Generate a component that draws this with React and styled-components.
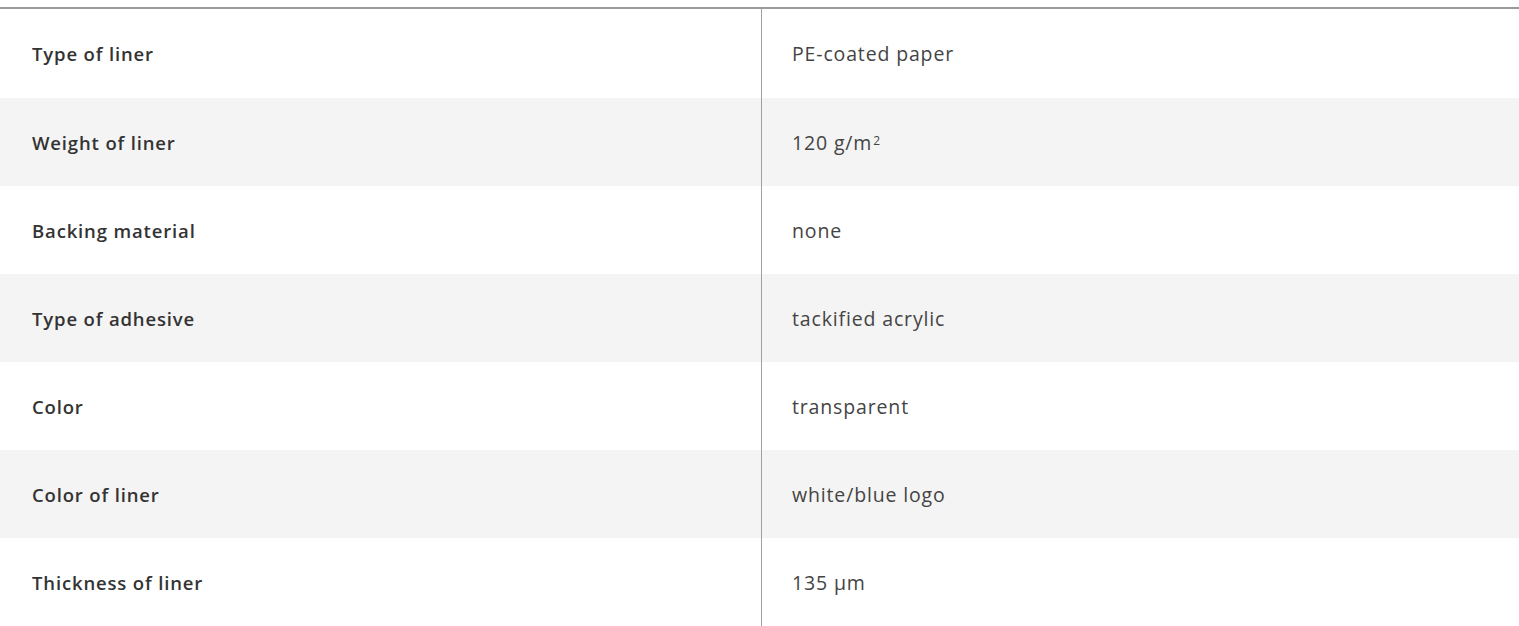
import styled, { createGlobalStyle } from "styled-components"

const GlobalStyle = createGlobalStyle`
    body {
        margin: 0;
        background: #fff;
        font-family: "Open Sans", "Liberation Sans", sans-serif;
    }
`;

const Page = styled.div`
    padding-top: 7px;
`;

const Table = styled.div`
    display: grid;
    grid-template-columns: 761px 1fr;
    border-top: 2px solid #9a9a9a;
`;

const Row = styled.div`
    display: contents;
`;

const Cell = styled.div`
    height: ${(p) => (p.first ? 89 : 88)}px;
    display: flex;
    align-items: center;
    box-sizing: border-box;
    background: ${(p) => (p.shaded ? "#f4f4f4" : "#fff")};
`;

const Label = styled(Cell)`
    padding-left: 32px;
    font-size: 18.5px;
    font-weight: 600;
    letter-spacing: 0.85px;
    color: #333;
`;

const Value = styled(Cell)`
    padding-left: 30px;
    border-left: 1px solid #a0a0a0;
    font-size: 19.5px;
    font-weight: 400;
    letter-spacing: 0.85px;
    color: #444;
`;

const Sup = styled.sup`
    font-size: 12px;
    line-height: 0;
    position: relative;
    top: -1px;
    margin-left: 1px;
    vertical-align: super;
`;

const rows = [
    ["Type of liner", "PE-coated paper"],
    ["Weight of liner", <>120 g/m<Sup>2</Sup></>],
    ["Backing material", "none"],
    ["Type of adhesive", "tackified acrylic"],
    ["Color", "transparent"],
    ["Color of liner", "white/blue logo"],
    ["Thickness of liner", "135 µm"],
];

const App = () => {
  return (
    <Page>
        <GlobalStyle />
        <Table>
            {rows.map(([label, value], i) => (
                <Row key={i}>
                    <Label first={i === 0} shaded={i % 2 === 1}>{label}</Label>
                    <Value first={i === 0} shaded={i % 2 === 1}>{value}</Value>
                </Row>
            ))}
        </Table>
    </Page>
  )
}

export default App
